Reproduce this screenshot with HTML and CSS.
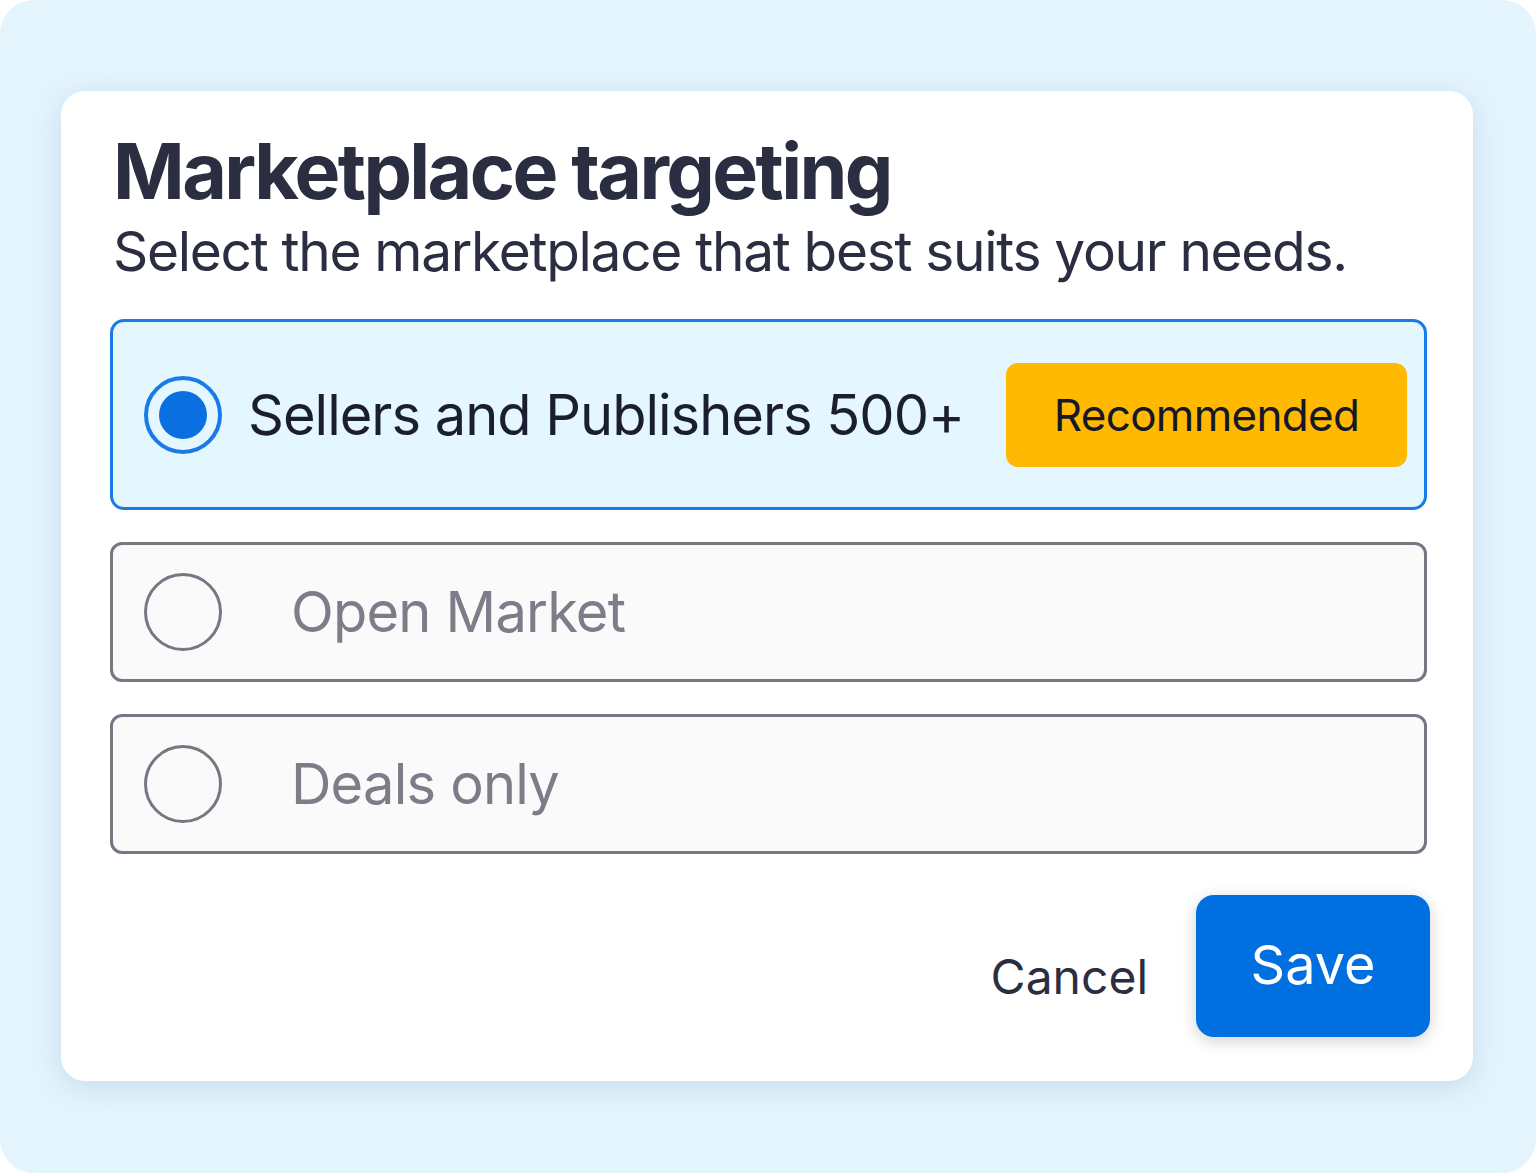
FILE: index.html
```html
<!doctype html>
<html lang="en">
<head>
    <meta charset="UTF-8">
    <meta name="viewport" content="width=device-width, initial-scale=1.0">
    <title>Marketplace targeting</title>
    <link rel="stylesheet" href="styles.css">
</head>
<body>
    <div class="frame">
        <div class="card">
            <div class="title">Marketplace targeting</div>
            <div class="subtitle">Select the marketplace that best suits your needs.</div>

            <div class="options">
                <div class="option selected">
                    <span class="radio"><span class="dot"></span></span>
                    <span class="label">Sellers and Publishers 500+</span>
                    <span class="badge">Recommended</span>
                </div>
                <div class="option">
                    <span class="radio"></span>
                    <span class="label">Open Market</span>
                </div>
                <div class="option">
                    <span class="radio"></span>
                    <span class="label">Deals only</span>
                </div>
            </div>

            <div class="actions">
                <button type="button" class="btn cancel">Cancel</button>
                <button type="button" class="btn save">Save</button>
            </div>
        </div>
    </div>
</body>
</html>
```

FILE: styles.css
```css
html, body {
    margin: 0;
    padding: 0;
    background: #ffffff;
}

body {
    font-family: Inter, "Noto Sans", sans-serif;
}

.frame {
    height: 1173px;
    box-sizing: border-box;
    background: #e4f4fd;
    border-radius: 34px;
    padding: 91px 63px 0 61px;
}

.card {
    background: #ffffff;
    border-radius: 24px;
    height: 990px;
    box-sizing: border-box;
    padding: 33px 46px 0 49px;
    box-shadow: 0 6px 28px rgba(120, 160, 190, 0.28);
}

.title {
    font-size: 77px;
    font-weight: 700;
    color: #2b2d40;
    letter-spacing: -2.6px;
    padding-left: 3px;
}

.subtitle {
    font-size: 55px;
    color: #2b2d40;
    letter-spacing: -1.3px;
    padding-left: 3px;
    margin-bottom: 35px;
}

.options {
    display: flex;
    flex-direction: column;
    gap: 32px;
}

.option {
    display: flex;
    align-items: center;
    height: 140px;
    box-sizing: border-box;
    padding: 0 17px 0 31px;
    border: 3px solid #767782;
    border-radius: 12px;
    background: #fafafa;
}

.option.selected {
    height: 191px;
    border-color: #1a7ae6;
    border-radius: 14px;
    background: #e4f6fe;
}

.radio {
    width: 78px;
    height: 78px;
    box-sizing: border-box;
    border: 3px solid #767782;
    border-radius: 50%;
    display: flex;
    align-items: center;
    justify-content: center;
    flex-shrink: 0;
}

.option.selected .radio {
    border: 4px solid #1a7ae6;
}

.radio .dot {
    width: 48px;
    height: 48px;
    border-radius: 50%;
    background: #0a6fe0;
}

.label {
    font-size: 56px;
    color: #7c7d88;
    letter-spacing: -0.8px;
    margin-left: 69px;
    flex: 1;
}

.option.selected .label {
    color: #1b1d30;
    letter-spacing: -1px;
    margin-left: 26px;
}

.badge {
    background: #ffb900;
    border-radius: 12px;
    height: 104px;
    width: 401px;
    display: flex;
    align-items: center;
    justify-content: center;
    font-size: 44px;
    letter-spacing: -0.7px;
    color: #15172a;
}

.actions {
    display: flex;
    justify-content: flex-end;
    align-items: center;
    gap: 48px;
    margin-top: 41px;
    margin-right: -3px;
}

.btn {
    font-family: Inter, "Noto Sans", sans-serif;
    border: none;
    cursor: pointer;
}

.cancel {
    background: none;
    padding: 20px 0 0 0;
    font-size: 48px;
    color: #2b2d40;
}

.save {
    width: 234px;
    height: 142px;
    border-radius: 18px;
    background: #0070e0;
    color: #ffffff;
    font-size: 54px;
    padding-bottom: 4px;
    box-shadow: 0 4px 16px rgba(0, 0, 0, 0.18);
}
```
